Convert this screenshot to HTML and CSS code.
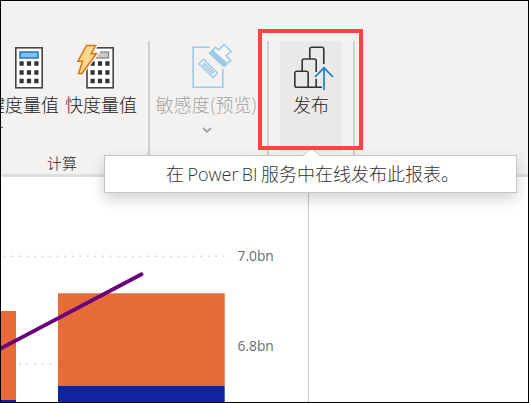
FILE: index.html
```html
<!DOCTYPE html>
<html lang="zh-CN">
<head>
<meta charset="utf-8">
<title>Power BI</title>
<link rel="stylesheet" href="styles.css">
</head>
<body>
<div class="window">
  <header class="ribbon">
    <section class="group calculations">
      <div class="buttons">
        <div class="button">
          <svg class="icon" width="36" height="48" viewBox="-3 0 36 48">
            <rect x="7.8" y="6.8" width="26.4" height="40" fill="#fff" stroke="#444" stroke-width="1.6"/>
            <rect x="12" y="11" width="18" height="6" fill="#83beec" stroke="#1a78c6" stroke-width="1.5"/>
            <path d="M11.5 22.5h19M11.5 31.5h19M11.5 40h19" stroke="#333" stroke-width="4.4" stroke-dasharray="4.2 3.2"/>
          </svg>
          <span>键度量值</span>
          <span class="tick"></span>
        </div>
        <div class="button">
          <svg class="icon" width="36" height="48" viewBox="4 0 36 48">
            <rect x="8" y="6.8" width="26.2" height="40" fill="#fff" stroke="#444" stroke-width="1.6"/>
            <rect x="12" y="11" width="17.5" height="6" fill="#c8c8c8" stroke="#888" stroke-width="1.3"/>
            <path d="M11.5 22.5h19M11.5 31.5h19M11.5 40h19" stroke="#333" stroke-width="4.4" stroke-dasharray="4.2 3.2"/>
            <path d="M8 4h9l-4 8h5L3 32l3-12H-1z" fill="#f3f2f1" stroke="#f3f2f1" stroke-width="4"/>
            <path d="M7.5 4.5h9l-4.3 8.2h5L3 32.5H-.5l4-12.3h-4.5z" fill="#fad98c" stroke="#dc7311" stroke-width="1.5"/>
          </svg>
          <span>快度量值</span>
        </div>
      </div>
      <div class="group-name">计算</div>
    </section>
    <section class="group sensitivity">
      <div class="button">
        <svg class="icon" width="42" height="48" viewBox="185.5 41 42 48">
          <path d="M209 47.3H192.7V87.3H222.3V69" fill="none" stroke="#9dcae6" stroke-width="1.6"/>
          <path d="M203 59L217 73L212.5 77.5L198.5 64z M204 63.3L212.8 72L211.3 73.5L202.5 65z" fill="none" stroke="#9dcae6" stroke-width="1.4"/>
          <path d="M209 53.3L215 47.3L218.5 50L223.5 44.3L230.7 51.7L225.5 55.5L230.3 60.7L223.5 66.2z" fill="#f7f7f7" stroke="#9dcae6" stroke-width="1.5"/>
          <path d="M209 53.3L212 50.5L226.5 63.5L223.5 66.2z" fill="#9dcae6" stroke="#9dcae6" stroke-width="1.4"/>
        </svg>
        <span>敏感度(预览)</span>
        <svg class="chevron" width="10" height="6" viewBox="0 0 10 6"><path d="M1 1l4 3.7L9 1" fill="none" stroke="#a0a0a0" stroke-width="1.8"/></svg>
      </div>
    </section>
    <section class="group share">
      <div class="button hovered">
        <svg class="icon" width="42" height="48" viewBox="-3 0 42 48">
          <path d="M3.8 30.2h9.4a2 2 0 0 1 2 2v14H3.8a2 2 0 0 1-2-2v-12a2 2 0 0 1 2-2z M9.2 29.5V20a2 2 0 0 1 2-2h10a2 2 0 0 1 2 2v11M16.8 17.5V8.3a2 2 0 0 1 2-2h10a2 2 0 0 1 2 2V23M15 46.3h14M23.2 38v8" fill="none" stroke="#333" stroke-width="1.6"/>
          <path d="M31 49V27M22 36l9-9.2 9 9.2" fill="none" stroke="#edebe9" stroke-width="4"/>
          <path d="M31 49V27M22 36l9-9.2 9 9.2" fill="none" stroke="#197fca" stroke-width="1.7"/>
        </svg>
        <span>发布</span>
      </div>
    </section>
  </header>
  <main class="canvas">
    <svg class="chart" width="306" height="225" viewBox="1 177 306 225">
      <path d="M4 256.3H225M19 364.3H57" stroke="#ccc" stroke-width="1.4" stroke-dasharray="1.5 6.05"/>
      <path d="M1 311h15v89H1zM58 293.2h166.7v92.5H58z" fill="#e66c37"/>
      <path d="M1 400h15v2H1zM58 385.7h166.7V402H58z" fill="#12239e"/>
      <path d="M-2 350L141.5 274.3" stroke="#6b007b" stroke-width="3.8" stroke-linecap="round"/>
      <text x="237.5" y="261">7.0bn</text>
      <text x="237.5" y="351.3">6.8bn</text>
    </svg>
  </main>
  <div class="tooltip">
    <svg class="caret" width="18" height="8" viewBox="0 0 18 8"><path d="M0 7L7 .5h3L17 7v1H0z" fill="#fff"/><path d="M0 6.5L7 .5h3l7 6" fill="none" stroke="#c8c6c4"/></svg>
    在 Power BI 服务中在线发布此报表。
  </div>
  <div class="highlight"></div>
</div>
</body>
</html>
```
FILE: styles.css
```css
* { box-sizing: border-box; }
body {
  margin: 0;
  font-family: "Open Sans", "Noto Sans CJK SC", sans-serif;
}
.window {
  position: relative;
  width: 529px;
  height: 403px;
  overflow: hidden;
  border: 1px solid #000;
  background: #fff;
}
.ribbon {
  display: flex;
  height: 176px;
  padding-top: 40px;
  background: #f3f2f1;
  border-bottom: 3px solid #dedede;
  color: #252423;
}
.group {
  height: 120px;
  border-right: 2px solid #d0d0d0;
}
.calculations { width: 149px; }
.buttons {
  display: flex;
  gap: 6px;
  height: 113px;
  margin-left: -14px;
}
.button {
  display: flex;
  flex-direction: column;
  align-items: center;
  font: 300 18px/26px "Noto Sans CJK SC", sans-serif;
  white-space: nowrap;
}
.buttons .button { width: 72px; }
.icon {
  flex: none;
  overflow: visible;
  margin-bottom: 2px;
}
.tick {
  align-self: flex-start;
  width: 2px;
  height: 1px;
  margin: 10px 0 0 14px;
  background: #555;
}
.group-name {
  margin-left: 46px;
  font: 300 15px/18px "Noto Sans CJK SC", sans-serif;
}
.sensitivity {
  width: 119px;
  color: #a3a2a0;
}
.sensitivity .button { padding-right: 4px; }
.chevron { margin-top: 10px; }
.share {
  width: 86px;
  padding-left: 11px;
}
.hovered {
  width: 62px;
  height: 110px;
  background: #eae9e8;
}
.canvas {
  width: 308px;
  height: 225px;
  border-right: 1px solid #c8c8c8;
}
.chart { display: block; }
.chart path { fill-rule: evenodd; }
.chart text {
  font: 13.8px "Open Sans", sans-serif;
  fill: #6c6c6c;
}
.tooltip {
  position: absolute;
  left: 103px;
  top: 154px;
  width: 413px;
  height: 38px;
  padding-left: 4px;
  border: 1px solid #c8c6c4;
  background: #fff;
  box-shadow: 0 6px 14px rgba(0, 0, 0, .18);
  color: #333;
  font: 300 18px/37px "Open Sans", "Noto Sans CJK SC", sans-serif;
  word-spacing: -1.3px;
  text-align: center;
}
.caret {
  position: absolute;
  left: 198px;
  top: -7px;
}
.highlight {
  position: absolute;
  left: 257px;
  top: 28px;
  width: 105px;
  height: 121px;
  border: 4px solid #ff4343;
}
```
